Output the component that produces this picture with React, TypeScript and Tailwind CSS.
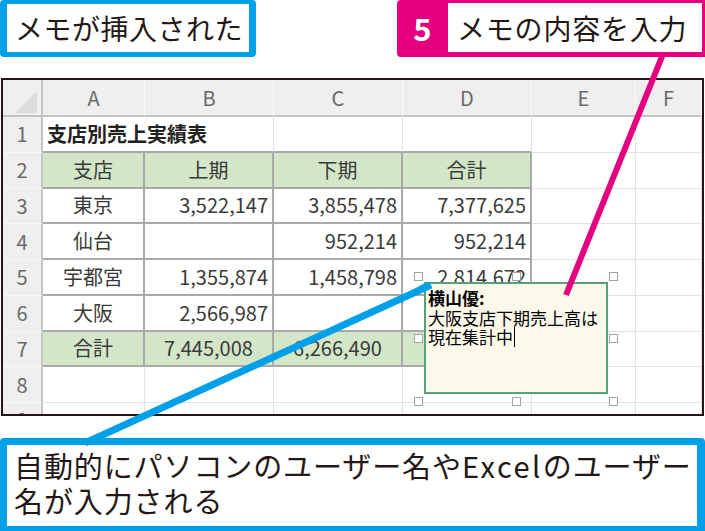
import React from "react";

type Kind = "grid" | "tbl" | "tblG" | "top" | "rowhdr";

const kindClass: Record<Kind, string> = {
  grid: "border-r border-b border-r-[#e2e2e2] border-b-[#e2e2e2] bg-white",
  tbl: "border-r-2 border-b-2 border-r-[#a9a9a9] border-b-[#a9a9a9] bg-white",
  tblG: "border-r-2 border-b-2 border-r-[#a9a9a9] border-b-[#a9a9a9] bg-[#d3e6c8]",
  top: "border-r border-r-[#e2e2e2] border-b-2 border-b-[#a9a9a9] bg-white",
  rowhdr: "border-r-2 border-r-[#c4c4c4] border-b border-b-[#f9f9f9] bg-[#efefef] justify-center text-[#666]",
};

function Cell({
  kind,
  align = "center",
  children,
  span,
  bold,
}: {
  kind: Kind;
  align?: "center" | "right" | "left";
  children?: React.ReactNode;
  span?: boolean;
  bold?: boolean;
}) {
  const a =
    align === "right" ? "justify-end pr-[4px]" : align === "left" ? "justify-start pl-[4px]" : "justify-center";
  return (
    <div
      className={`box-border flex items-center overflow-visible whitespace-nowrap text-[20px] text-[#3a3a3a] ${kindClass[kind]} ${a} ${
        span ? "col-span-2" : ""
      } ${bold ? "font-bold text-[#222]" : ""}`}
    >
      {children}
    </div>
  );
}

function RowHdr({ n }: { n: string }) {
  return (
    <div className="box-border flex items-center justify-center border-r-2 border-b border-r-[#c4c4c4] border-b-[#f9f9f9] bg-[#efefef] text-[20px] text-[#6a6a6a]">
      {n}
    </div>
  );
}

function ColHdr({ c }: { c: string }) {
  return (
    <div className="box-border flex items-center justify-center border-r border-b-2 border-r-[#fbfbfb] border-b-[#c4c4c4] bg-[#efefef] text-[20px] text-[#6a6a6a]">
      {c}
    </div>
  );
}

const rows: { label: string; b: string; c: string; d: string; green?: boolean }[] = [
  { label: "支店", b: "上期", c: "下期", d: "合計", green: true },
  { label: "東京", b: "3,522,147", c: "3,855,478", d: "7,377,625" },
  { label: "仙台", b: "", c: "952,214", d: "952,214" },
  { label: "宇都宮", b: "1,355,874", c: "1,458,798", d: "2,814,672" },
  { label: "大阪", b: "2,566,987", c: "", d: "" },
  { label: "合計", b: "7,445,008", c: "6,266,490", d: "", green: true },
];

function Handle({ x, y }: { x: number; y: number }) {
  return (
    <div
      className="absolute h-[9px] w-[9px] border-[1.5px] border-[#a3a3a3] bg-white"
      style={{ left: x, top: y }}
    />
  );
}

export default function App() {
  return (
    <div
      className="relative h-[531px] w-[705px] overflow-hidden bg-white text-[#231815]"
      style={{ fontFamily: '"Noto Sans CJK JP", "Noto Sans", sans-serif' }}
    >
      {/* top labels */}
      <div className="flex h-[57px] items-stretch justify-between">
        <div className="flex w-[256px] items-center rounded-[4px] border-x-[7px] border-t-[4px] border-b-[5px] border-[#00a0e9] pl-[8px] text-[28px] leading-none tracking-[0.5px]">
          メモが挿入された
        </div>
        <div className="flex w-[308px] items-stretch rounded-l-[4px] bg-[#e4007f] pt-[3px] pr-[3px] pb-[5px]">
          <div className="flex w-[51px] items-center justify-center text-[31px] font-bold leading-none text-white">5</div>
          <div className="flex flex-1 items-center bg-white pl-[9px] text-[28px] leading-none tracking-[0.8px]">
            メモの内容を入力
          </div>
        </div>
      </div>

      {/* spreadsheet */}
      <div className="ml-[1px] mt-[21px] box-border h-[338px] w-[703px] overflow-hidden border-2 border-[#231815]">
        <div className="grid grid-cols-[40px_102px_129px_129px_129px_104px_66px] grid-rows-[37px_repeat(9,35.75px)]">
          {/* header row */}
          <div className="relative box-border border-r-2 border-b-2 border-r-[#c4c4c4] border-b-[#c4c4c4] bg-[#efefef]">
            <svg className="absolute left-0 top-0" width="38" height="35" viewBox="0 0 38 35">
              <polygon points="34,11 34,33 12,33" fill="#dcdcdc" />
            </svg>
          </div>
          <ColHdr c="A" />
          <ColHdr c="B" />
          <ColHdr c="C" />
          <ColHdr c="D" />
          <ColHdr c="E" />
          <ColHdr c="F" />

          {/* row 1 */}
          <RowHdr n="1" />
          <Cell kind="top" align="left" span bold>
            支店別売上実績表
          </Cell>
          <Cell kind="top" />
          <Cell kind="top" />
          <Cell kind="grid" />
          <Cell kind="grid" />

          {rows.map((r, i) => (
            <React.Fragment key={i}>
              <RowHdr n={String(i + 2)} />
              <Cell kind={r.green ? "tblG" : "tbl"}>{r.label}</Cell>
              <Cell kind={r.green ? "tblG" : "tbl"} align={r.green ? "center" : "right"}>
                {r.b}
              </Cell>
              <Cell kind={r.green ? "tblG" : "tbl"} align={r.green ? "center" : "right"}>
                {r.c}
              </Cell>
              <Cell kind={r.green ? "tblG" : "tbl"} align={r.green ? "center" : "right"}>
                {r.d}
              </Cell>
              <Cell kind="grid" />
              <Cell kind="grid" />
            </React.Fragment>
          ))}

          {["8", "9"].map((n) => (
            <React.Fragment key={n}>
              <RowHdr n={n} />
              <Cell kind="grid" />
              <Cell kind="grid" />
              <Cell kind="grid" />
              <Cell kind="grid" />
              <Cell kind="grid" />
              <Cell kind="grid" />
            </React.Fragment>
          ))}
        </div>
      </div>

      {/* bottom caption */}
      <div className="mt-[22px] box-border h-[93px] rounded-t-[4px] border-t-[7px] border-l-[7px] border-r-[8px] border-b-[5px] border-[#00a0e9] pl-[7px] pt-[3px] text-[29px] leading-[35px] tracking-[0.9px]">
        <div className="whitespace-nowrap">
          自動的にパソコンのユーザー名や<span className="tracking-[2.5px]">Excel</span>のユーザー
        </div>
        <div>名が入力される</div>
      </div>

      {/* comment indicator (red triangle) */}
      <svg className="pointer-events-none absolute left-0 top-0" width="705" height="531">
        <polygon points="396,297 403,297 403,304" fill="#e0502a" />
        <line x1="404" y1="296" x2="425" y2="283" stroke="#5a9e78" strokeWidth="1" />
        <polygon points="403,297 410,291 411,295" fill="#2d7a4c" />
      </svg>

      {/* comment box */}
      <div className="absolute left-[424px] top-[282px] box-border h-[112px] w-[184px] border-2 border-[#55a27a] bg-[#fcf9ea] pl-[2px] pt-[4px] text-[17px] leading-[19.5px] text-black">
        <div className="font-bold">横山優:</div>
        <div className="whitespace-nowrap">大阪支店下期売上高は</div>
        <div className="flex items-center">
          現在集計中<span className="ml-[1px] inline-block h-[20px] w-[1px] bg-black" />
        </div>
      </div>
      <Handle x={414} y={272} />
      <Handle x={512} y={272} />
      <Handle x={609} y={272} />
      <Handle x={414} y={334} />
      <Handle x={609} y={334} />
      <Handle x={414} y={397} />
      <Handle x={512} y={397} />
      <Handle x={609} y={397} />

      {/* leader lines */}
      <svg className="pointer-events-none absolute left-0 top-0" width="705" height="531">
        <line x1="663" y1="54" x2="566" y2="295" stroke="#e4007f" strokeWidth="6" />
        <line x1="85" y1="443" x2="431" y2="285" stroke="#00a0e9" strokeWidth="7" />
      </svg>
    </div>
  );
}
